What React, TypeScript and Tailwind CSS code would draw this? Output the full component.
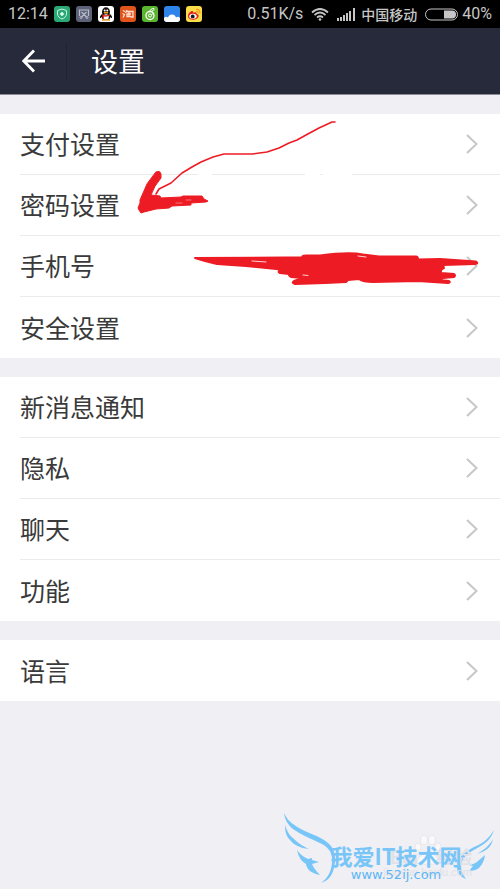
import type { ReactNode } from "react";

const groups = [
    ["支付设置", "密码设置", "手机号", "安全设置"],
    ["新消息通知", "隐私", "聊天", "功能"],
    ["语言"],
];

function AppIcon({ className, children }: { className: string; children: ReactNode }) {
    return (
        <svg viewBox="0 0 16 16" className={`size-4 rounded-[3px] ${className}`} aria-hidden="true">
            {children}
        </svg>
    );
}

function StatusBar() {
    return (
        <div className="flex h-7 items-center justify-between bg-black pl-2 pr-2 text-[#c6c6c6]">
            <div className="flex items-center gap-1.5">
                <span className="font-['Roboto',sans-serif] text-base">12:14</span>
                <AppIcon className="bg-[#2aa876]">
                    <path d="M8 3 12.500 4.500V8c0 2.500-2 4-4.500 5-2.500-1-4.500-2.500-4.500-5V4.500Z" fill="none" stroke="#c9efdf" />
                    <path d="M8 6v4M6 8h4" stroke="#e4fff4" strokeWidth="1.500" />
                </AppIcon>
                <AppIcon className="bg-[#5d6279]">
                    <path d="M3.500 10V4h9v6M5.500 6l5 5M10.500 6l-5 5" fill="none" stroke="#b9bdca" strokeWidth="1.200" />
                    <circle cx="5" cy="11.500" r="1" fill="none" stroke="#b9bdca" />
                    <circle cx="11" cy="11.500" r="1" fill="none" stroke="#b9bdca" />
                </AppIcon>
                <AppIcon className="bg-white">
                    <path d="M4 8C1.500 10 1.500 12.500 2.700 12L5 10h6l2.300 2c1.200.5 1.200-2-1.300-4Z" fill="#111" />
                    <ellipse cx="8" cy="6" rx="4" ry="4.700" fill="#111" />
                    <ellipse cx="8" cy="10.500" rx="4.300" ry="3.800" fill="#111" />
                    <ellipse cx="8" cy="11" rx="2.800" ry="2.700" fill="#fff" />
                    <circle cx="6.700" cy="4.500" r="1" fill="#fff" />
                    <circle cx="9.300" cy="4.500" r="1" fill="#fff" />
                    <ellipse cx="8" cy="6.700" rx="2.400" ry=".9" fill="#f5a21b" />
                    <path d="M4 8q4 2.500 8 0v1.500q-3 1.500-6 1v2H4.500V9.500Z" fill="#e22b20" />
                    <path d="M4 14h3.500M8.500 14H12" stroke="#f5a21b" strokeWidth="1.600" />
                </AppIcon>
                <AppIcon className="bg-[#e1541c]">
                    <path d="m3 4.500 2 1M2.500 7.500l2 1L3 11.500M7 4 5.500 7M6.500 5.500H13V11h-2M6.500 8H11M9 6v4.500M7 8.500v2h4" fill="none" stroke="#ffe2d3" strokeWidth="1.300" />
                </AppIcon>
                <AppIcon className="bg-[#5cb531]">
                    <circle cx="8" cy="9.500" r="4" fill="none" stroke="#fff" strokeWidth="1.300" />
                    <circle cx="8" cy="9.500" r="1.500" fill="none" stroke="#fff" />
                    <path d="M8 5.500C8 3.500 9.500 2.500 12 2.500 12 4.500 10.500 5.500 8 5.500M9.500 8.500 12 7" fill="none" stroke="#fff" />
                </AppIcon>
                <AppIcon className="bg-[#2f84ea]">
                    <path d="M0 16v-4q2-2 4-.5Q5 8.500 8 8.500t4 3q2-1.500 4 .5v4Z" fill="#fff" />
                </AppIcon>
                <AppIcon className="bg-[#fbdc4b]">
                    <path d="M2 10c0-3 4-6 5-4.500.5.700 0 1.300 0 1.300 2-1 4-.8 3.500 1 2 .5 2.500 1.800 2 3-1.500 4-10.500 4-10.500-.8Z" fill="#e52620" />
                    <ellipse cx="7" cy="10.300" rx="3.700" ry="2.500" fill="#fff" />
                    <circle cx="6.700" cy="10.400" r="1.900" fill="#171717" />
                    <path d="M10 3.500c3-.8 4.500 1.500 3.800 4M10.200 5.500c1.500-.3 2.200.5 1.800 2" fill="none" stroke="#f59b24" strokeWidth="1.200" />
                </AppIcon>
            </div>
            <div className="flex items-center">
                <span className="font-['Roboto',sans-serif] text-base">0.51K/s</span>
                <svg viewBox="0 0 18 14" className="ml-2 h-3.5 w-[18px]" fill="none" stroke="currentColor" strokeWidth="1.700" aria-hidden="true">
                    <path d="M1 5.500q8-7 16 0M3.500 8q5.500-5 11 0M6 10.500q3-2.500 6 0" />
                    <circle cx="9" cy="12.500" r="1.300" fill="currentColor" stroke="none" />
                </svg>
                <svg viewBox="0 0 18 13" className="ml-2 h-[13px] w-[18px]" fill="currentColor" aria-hidden="true">
                    <path d="M0 10h2v3H0zM3 9h2v4H3zM6 7h2v6H6zM9 5h2v8H9zM12 3h2v10h-2zM16 0h2v13h-2z" />
                </svg>
                <span className="ml-1.5 font-['Noto_Sans_CJK_SC',sans-serif] text-sm font-medium leading-4">中国移动</span>
                <svg viewBox="0 0 33 13" className="ml-2 h-[13px] w-[33px]" aria-hidden="true">
                    <rect x=".5" y="1" width="32" height="11" rx="5.500" fill="none" stroke="currentColor" />
                    <path d="M19 2.500h8a4 4 0 0 1 0 8h-8Z" fill="currentColor" />
                </svg>
                <span className="ml-1 font-['Roboto',sans-serif] text-base">40%</span>
            </div>
        </div>
    );
}

function Header() {
    return (
        <header className="flex h-[67px] items-center border-b border-[#8b8c98] bg-[#272a3a] text-white">
            <button type="button" aria-label="返回" className="flex h-9 w-[67px] items-center border-r border-[#202331] pl-[22px]">
                <svg viewBox="0 0 24 24" className="size-6" fill="none" stroke="currentColor" strokeWidth="2.800" aria-hidden="true">
                    <path d="M23 12H2M12 1.500 1.800 12 12 22.500" />
                </svg>
            </button>
            <h1 className="pl-6 text-[27px] leading-9">设置</h1>
        </header>
    );
}

function Scribble() {
    return (
        <svg viewBox="0 114 500 244" className="pointer-events-none absolute inset-0 size-full" fill="none" stroke="#ed1c24" strokeLinecap="round" strokeLinejoin="round" aria-hidden="true">
            <path d="M198 174.500h14M305 174.500h15M323 174.500h29" stroke="#fff" strokeWidth="3" strokeLinecap="butt" />
            <path d="M335 122h-3l-13 6-13 7-9 5-8 3-10 5-12 4-15 2h-28l-11 3-12 5-9 5-10 6-11 10-12 6-3 5" strokeWidth="1.600" />
            <path d="M156 172q4-2 5 2v4q-7 8-10 17l9 1 1 2 20-1 2-1h19l2 3 4 2-2 1-15 1v2l-19 1-3 2-13 1-12 3-3 1-2-3-1-2 2-5v-3l7-16Z" fill="#ed1c24" strokeWidth="1" />
            <path d="M176 203h6M186 200h5" stroke="#f78c90" strokeWidth="0.800" />
            <path d="m195 258 90-.5h18q-2-2 3-2h14q29-4 43-1l16 2h37q2 0 2 3l22-.5 36 2.500q3 2-1 2.500l-32 1 1 3-3 2v3l13 1q2 1.500 0 3l-11 1-3 2 9 1q2 1.500-1 2l-30-2-45 1q-10 0-14-3l-11 1-2 2-21 1-30 1q-4-1-1-3l9-3-12-1q-3-2-2-3l-9-1q-2-1-1-2l7-1-40-4-29-2-12-3Z" fill="#ed1c24" strokeWidth="2" />
            <path d="m252 261 14 1M358 256l8 1M303 275l5 .5" stroke="#fff" strokeWidth="0.800" />
        </svg>
    );
}

function SettingsGroup({ items, children }: { items: string[]; children?: ReactNode }) {
    return (
        <section className="relative bg-white">
            <ul>
                {items.map((item, i) => (
                    <li key={item} className="pl-5">
                        <button type="button" className={`flex h-[61px] w-full items-center justify-between pr-[22px] text-left text-[25px] ${i < items.length - 1 ? "border-b border-[#ebebeb]" : ""}`}>
                            {item}
                            <svg viewBox="0 0 12 20" className="h-5 w-3" fill="none" stroke="#c7c7c7" strokeWidth="2" aria-hidden="true">
                                <path d="m1 1 9.500 9L1 19" />
                            </svg>
                        </button>
                    </li>
                ))}
            </ul>
            {children}
        </section>
    );
}

function Watermark() {
    return (
        <footer className="mt-auto flex justify-end pr-1.5">
            <div className="relative flex h-[78px] w-[212px] flex-col items-center pl-4 pt-8">
                <svg viewBox="282 811 212 78" className="absolute inset-0 size-full" fill="#78c5f8" aria-hidden="true">
                    <path d="M284 813c3 6 5 8 9 11 10 8 22 10 31 16 8 5 11 11 11 18 0 13-4 22-14 25 7-5 10-11 11-20 1-10-3-15-10-19-12-6-21-9-29-15-5-4-8-9-9-16Z" />
                    <path d="M285 825c2 6 4 10 9 14 5 5 9 7 15 10-9-1-15-4-19-9-4-4-5-9-5-15ZM297 850q4 6 11 9l4-1v2l7 2-7 2q2 5 8 11-9-2-12-6-2-3-2-5-7-4-9-14Z" />
                    <path d="M494 830c-3 9-8 13-15 17-11 6-17 10-18 19 0 5 2 9 5 13-6-2-9-7-9-12 0-9 7-15 17-20 10-4 15-9 20-17Z" />
                    <path d="M493 839c-2 9-7 12-16 15 8-5 12-8 16-15ZM485 855q-1 8-6 13-4 3-10 3l4-5-4-1q6-1 9-4Z" />
                    <g fill="#f9f9fb" stroke="#dedee4" strokeWidth=".6">
                        <ellipse cx="418" cy="847" rx="3" ry="4" />
                        <ellipse cx="424" cy="840" rx="3.500" ry="4.500" />
                        <ellipse cx="432" cy="840" rx="3.500" ry="4.500" />
                        <ellipse cx="438" cy="847" rx="3" ry="4" />
                        <path d="M417 864q0-6 5-9 6-7 12 0 5 3 5 9Z" />
                    </g>
                </svg>
                <div className="absolute right-[22px] top-[35px] text-right text-[#e1e1e7]">
                    <p className="text-lg font-bold leading-5">Bai&ensp;&ensp;经验</p>
                    <p className="font-['Liberation_Sans',sans-serif] text-[11px] leading-3">jingyan.baidu.com</p>
                </div>
                <p className="relative whitespace-nowrap text-[22px] font-bold leading-6 text-[#78c5f8]">我爱IT技术网</p>
                <p className="relative font-['DejaVu_Sans',sans-serif] text-[13px] leading-4 text-[#5db6f4]">www.52ij.com</p>
            </div>
        </footer>
    );
}

export default function App() {
    return (
        <div className="flex min-h-screen flex-col bg-[#efeff4] font-['Noto_Sans_CJK_SC',sans-serif] text-[#3a3a3a]">
            <StatusBar />
            <Header />
            <main className="flex flex-col gap-[19px] pt-[19px]">
                {groups.map((items, i) => (
                    <SettingsGroup key={items[0]} items={items}>
                        {i === 0 && <Scribble />}
                    </SettingsGroup>
                ))}
            </main>
            <Watermark />
        </div>
    );
}
